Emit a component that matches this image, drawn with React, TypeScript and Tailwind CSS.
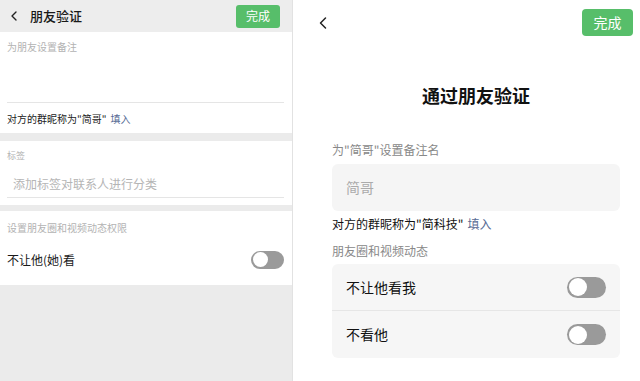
import { ChevronLeft } from "lucide-react";

const font = { fontFamily: '"Noto Sans CJK SC", "Noto Sans", sans-serif' };

function Toggle({ size = "sm" }: { size?: "sm" | "lg" }) {
  const big = size === "lg";
  return (
    <div className={`relative rounded-full bg-[#9a9a9a] ${big ? "w-[39px] h-[21px]" : "w-[33px] h-[18px]"}`}>
      <div
        className={`absolute top-[1.5px] left-[1.5px] rounded-full bg-white ${big ? "w-[18px] h-[18px]" : "w-[15px] h-[15px]"}`}
      />
    </div>
  );
}

function OldVerify() {
  return (
    <div className="w-[293px] h-full flex flex-col bg-[#ebebeb] border-r border-[#e2e2e2]">
      <div className="h-[32px] flex items-center justify-between pl-[6px] pr-[12px] bg-[#ededed]">
        <div className="flex items-center gap-[8px]">
          <ChevronLeft size={16} strokeWidth={2} className="text-[#222]" />
          <span className="text-[13px] font-medium text-[#191919]">朋友验证</span>
        </div>
        <div className="w-[44px] h-[23px] rounded-[3px] bg-[#57be6a] text-white text-[12px] flex items-center justify-center">完成</div>
      </div>

      <div className="bg-white px-[7px] pr-[8px]">
        <div className="h-[71px] pt-[7px] text-[10px] text-[#b3b3b3] border-b border-[#e5e5e5]">为朋友设置备注</div>
        <div className="h-[30px] flex items-center text-[10px] text-[#222]">
          对方的群昵称为"简哥"<span className="ml-[4px] text-[#576b95]">填入</span>
        </div>
      </div>

      <div className="h-[8px]" />

      <div className="bg-white px-[7px] pr-[8px]">
        <div className="pt-[8px] text-[9px] text-[#b3b3b3]">标签</div>
        <div className="h-[35px] pt-[9px] flex items-center pl-[6px] text-[12px] text-[#b5b5b5] border-b border-[#e5e5e5]">添加标签对联系人进行分类</div>
        <div className="h-[7px]" />
      </div>

      <div className="h-[6px]" />

      <div className="bg-white px-[7px] pr-[8px]">
        <div className="pt-[9px] text-[10px] text-[#b3b3b3]">设置朋友圈和视频动态权限</div>
        <div className="h-[50px] flex items-center justify-between text-[12px] text-[#191919]">
          <span>不让他(她)看</span>
          <Toggle />
        </div>
      </div>

      <div className="flex-1 bg-[#ebebeb]" />
    </div>
  );
}

function NewVerify() {
  return (
    <div className="flex-1 h-full bg-white flex flex-col pl-[32px] pr-[20px]">
      <div className="h-[45px] flex items-center justify-between -ml-[19px]">
        <ChevronLeft size={20} strokeWidth={1.8} className="text-[#222]" />
        <div className="w-[51px] h-[27px] -mr-[13px] rounded-[4px] bg-[#57be6a] text-white text-[14px] flex items-center justify-center">完成</div>
      </div>
      <div className="mt-[36px] text-center text-[18px] font-bold text-[#111] leading-[28px]">通过朋友验证</div>

      <div className="mt-[32px] text-[12px] text-[#888]">为"简哥"设置备注名</div>
      <div className="mt-[5px] h-[47px] rounded-[6px] bg-[#f5f5f5] flex items-center pl-[14px] text-[14px] text-[#ababab]">简哥</div>
      <div className="mt-[4px] text-[12px] text-[#111]">
        对方的群昵称为"简科技"<span className="ml-[4px] text-[#576b95]">填入</span>
      </div>

      <div className="mt-[9px] text-[12px] text-[#888]">朋友圈和视频动态</div>
      <div className="mt-[4px] rounded-[6px] bg-[#f6f6f6]">
        <div className="h-[47px] flex items-center justify-between px-[14px] border-b border-[#e6e6e6] text-[14px] text-[#111]">
          <span>不让他看我</span>
          <Toggle size="lg" />
        </div>
        <div className="h-[47px] flex items-center justify-between px-[14px] text-[14px] text-[#111]">
          <span>不看他</span>
          <Toggle size="lg" />
        </div>
      </div>
    </div>
  );
}

export default function App() {
  return (
    <div className="w-[640px] h-[381px] flex bg-white overflow-hidden" style={font}>
      <OldVerify />
      <div className="w-[7px] h-full bg-white" />
      <NewVerify />
    </div>
  );
}
